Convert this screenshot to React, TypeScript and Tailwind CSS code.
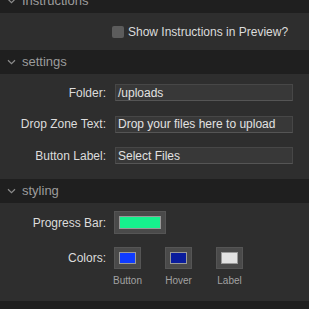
import React from 'react';

const Chevron = () => (
  <svg width="9" height="6" viewBox="0 0 9 6" className="shrink-0">
    <path d="M1 1.2 L4.5 4.6 L8 1.2" fill="none" stroke="#8c8c8c" strokeWidth="1.2" />
  </svg>
);

const SectionHeader = ({ title, className = '' }: { title: string; className?: string }) => (
  <div className={`h-[24px] flex items-center gap-[6px] pl-[7px] bg-[#1f1f1f] text-[13px] text-[#9c9c9c] ${className}`}>
    <Chevron />
    <span>{title}</span>
  </div>
);

const TextRow = ({ label, value }: { label: string; value: string }) => (
  <div className="flex items-center h-[17px]">
    <div className="w-[106px] text-right text-[12px] text-[#dcdcdc]">{label}</div>
    <div className="ml-[9px] w-[178px] h-[17px] bg-[#383838] border border-[#474747] border-b-[#555] flex items-center px-[2px] text-[12px] text-[#e2e2e2]">
      {value}
    </div>
  </div>
);

const Swatch = ({ color, sub }: { color: string; sub: string }) => (
  <div className="flex flex-col items-center w-[27px]">
    <div className="w-[27px] h-[22px] bg-[#4a4a4a] border border-[#555] flex items-center justify-center">
      <div className="w-[17px] h-[12px] border border-[#9a9a9a]" style={{ background: color }} />
    </div>
    <div className="mt-[4px] text-[10px] text-[#a2a2a2] whitespace-nowrap">{sub}</div>
  </div>
);

export default function App() {
  return (
    <div
      className="w-[309px] h-[309px] overflow-hidden bg-[#1f1f1f]"
      style={{ fontFamily: '"Liberation Sans", Arial, sans-serif' }}
    >
      <SectionHeader title="Instructions" className="-mt-[11px]" />
      <div className="h-[37px] bg-[#2e2e2e] flex items-center pl-[112px]">
        <div className="w-[12px] h-[12px] rounded-[2px] bg-[#5c5c5c]" />
        <span className="ml-[4px] text-[12px] text-[#dcdcdc]">Show Instructions in Preview?</span>
      </div>

      <SectionHeader title="settings" />
      <div className="h-[105px] bg-[#2e2e2e] pt-[10px] flex flex-col gap-[14.5px]">
        <TextRow label="Folder:" value="/uploads" />
        <TextRow label="Drop Zone Text:" value="Drop your files here to upload" />
        <TextRow label="Button Label:" value="Select Files" />
      </div>

      <SectionHeader title="styling" />
      <div className="h-[98px] bg-[#2e2e2e] pt-[8px]">
        <div className="flex items-center">
          <div className="w-[106px] text-right text-[12px] text-[#dcdcdc]">Progress Bar:</div>
          <div className="ml-[8px] w-[52px] h-[23px] bg-[#4a4a4a] border border-[#555] flex items-center justify-center">
            <div className="w-[42px] h-[13px] bg-[#16f18d] border border-[#9a9a9a]" />
          </div>
        </div>
        <div className="flex items-start mt-[13px]">
          <div className="w-[106px] h-[22px] flex items-center justify-end text-[12px] text-[#dcdcdc]">Colors:</div>
          <div className="ml-[8px] flex gap-[24px]">
            <Swatch color="#0f3bff" sub="Button" />
            <Swatch color="#0a1c9c" sub="Hover" />
            <Swatch color="#e3e3e3" sub="Label" />
          </div>
        </div>
      </div>
    </div>
  );
}
